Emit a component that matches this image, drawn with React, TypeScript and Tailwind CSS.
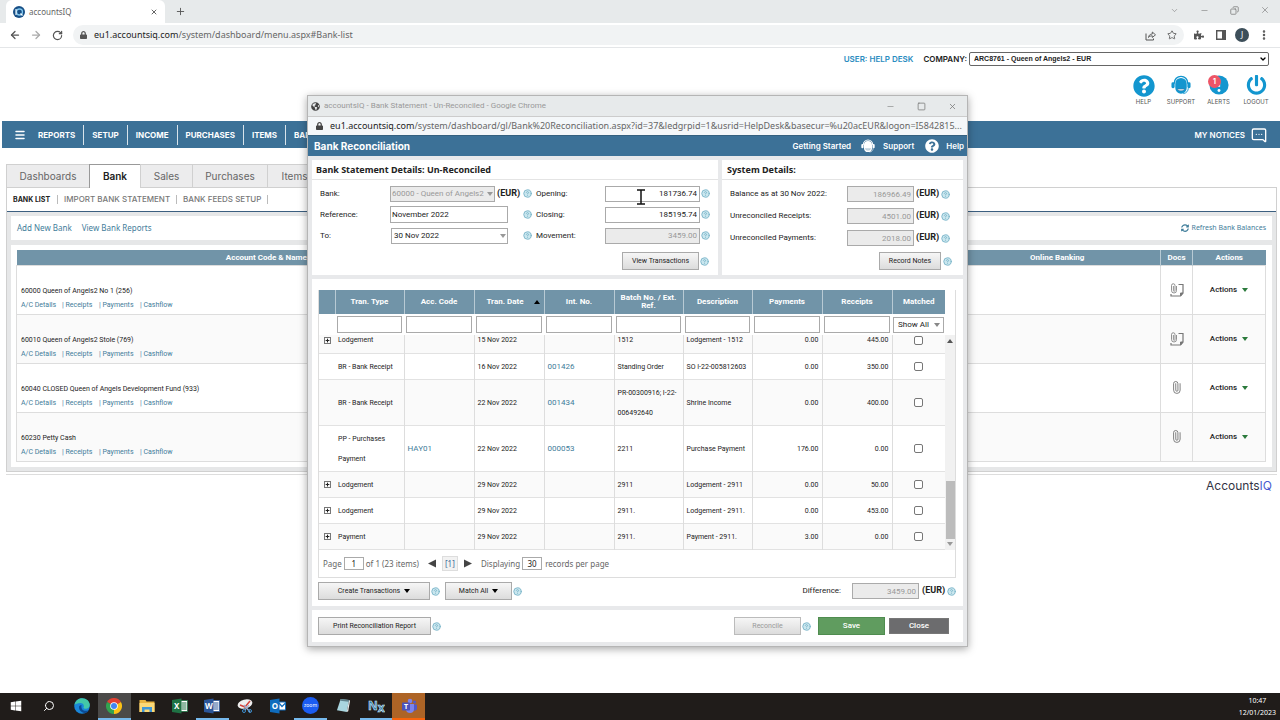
import { ReactNode } from "react";
import {
  ArrowLeft,
  ArrowRight,
  ChevronDown,
  CircleHelp,
  Copy,
  EllipsisVertical,
  Menu,
  MessageSquareMore,
  Minus,
  Paperclip,
  Plus,
  RotateCw,
  Search,
  Square,
  Star,
  X,
} from "lucide-react";
import { FaGlobeAmericas, FaLock, FaPowerOff, FaPuzzlePiece, FaQuestionCircle, FaSyncAlt, FaWindows } from "react-icons/fa";

const menuItems = ["REPORTS", "SETUP", "INCOME", "PURCHASES", "ITEMS", "BANK"];

const tabs = [
  { name: "Dashboards", width: "w-[83px]" },
  { name: "Bank", width: "w-[51px]" },
  { name: "Sales", width: "w-[52px]" },
  { name: "Purchases", width: "w-[75px]" },
  { name: "Items", width: "w-[54px]" },
];

const accounts = [
  { name: "60000 Queen of Angels2 No 1 (256)", note: true },
  { name: "60010 Queen of Angels2 Stole (769)", note: true },
  { name: "60040 CLOSED Queen of Angels Development Fund (933)", note: false },
  { name: "60230 Petty Cash", note: false },
];

const transactions = [
  { expand: true, type: "Lodgement", acc: "", date: "15 Nov 2022", no: "", ref: "1512", desc: "Lodgement - 1512", pay: "0.00", rec: "445.00", tall: false },
  { expand: false, type: "BR - Bank Receipt", acc: "", date: "16 Nov 2022", no: "001426", ref: "Standing Order", desc: "SO I-22-005812603", pay: "0.00", rec: "350.00", tall: false },
  { expand: false, type: "BR - Bank Receipt", acc: "", date: "22 Nov 2022", no: "001434", ref: "PR-00300916; I-22-006492640", desc: "Shrine Income", pay: "0.00", rec: "400.00", tall: true },
  { expand: false, type: "PP - Purchases Payment", acc: "HAY01", date: "22 Nov 2022", no: "000053", ref: "2211", desc: "Purchase Payment", pay: "176.00", rec: "0.00", tall: true },
  { expand: true, type: "Lodgement", acc: "", date: "29 Nov 2022", no: "", ref: "2911", desc: "Lodgement - 2911", pay: "0.00", rec: "50.00", tall: false },
  { expand: true, type: "Lodgement", acc: "", date: "29 Nov 2022", no: "", ref: "2911.", desc: "Lodgement - 2911.", pay: "0.00", rec: "453.00", tall: false },
  { expand: true, type: "Payment", acc: "", date: "29 Nov 2022", no: "", ref: "2911.", desc: "Payment - 2911.", pay: "3.00", rec: "0.00", tall: false },
];

const columns = ["Tran. Type", "Acc. Code", "Tran. Date", "Int. No.", "Batch No. / Ext. Ref.", "Description", "Payments", "Receipts"];

const Caret = ({ className = "" }: { className?: string }) => (
  <svg viewBox="0 0 6 4" className={`w-[6px] h-[4px] shrink-0 ${className}`}>
    <path d="M0 0h6L3 4z" fill="currentColor" />
  </svg>
);

const HelpDot = () => (
  <CircleHelp className="w-[9px] h-[9px] shrink-0 fill-[#c9e6ee] text-[#79b4c8]" strokeWidth={2.4} />
);

const Headset = ({ className }: { className: string }) => (
  <svg viewBox="0 0 22 22" className={className} fill="none">
    <path d="M3.500 9.500C3.500 4.500 7 1.500 11 1.500s7.500 3 7.500 8" stroke="currentColor" strokeWidth="1.600" />
    <rect x="0.500" y="8" width="3.500" height="6.500" rx="1.600" fill="currentColor" />
    <rect x="18" y="8" width="3.500" height="6.500" rx="1.600" fill="currentColor" />
    <path d="M4.700 9.500a6.300 6.300 0 0 1 12.600 0V14a6.300 6.500 0 0 1-12.600 0z" fill="currentColor" />
    <path d="M7 15.500h8c-.8 2.600-7.200 2.600-8 0z" className="fill-white stroke-[#3c7197]" strokeWidth=".6" />
    <path d="M19 14.500c0 3-2 5.500-5.500 6" stroke="currentColor" />
  </svg>
);

const GridCols = () => (
  <colgroup>
    <col className="w-[16px]" />
    <col className="w-[69px]" />
    <col className="w-[70px]" />
    <col className="w-[70px]" />
    <col className="w-[70px]" />
    <col className="w-[69px]" />
    <col className="w-[69px]" />
    <col className="w-[70px]" />
    <col className="w-[70px]" />
    <col className="w-[53px]" />
  </colgroup>
);

const GreyButton = ({ children, className = "" }: { children: ReactNode; className?: string }) => (
  <button
    className={`h-[18px] flex items-center justify-center gap-1 border border-[#aaa] bg-linear-to-b from-[#f6f6f6] to-[#dcdcdc] text-[7px] text-[#222] ${className}`}
  >
    {children}
  </button>
);

const BrowserBar = () => (
  <>
    <div className="h-[23px] bg-[#e7eaeb] flex items-end">
      <div className="ml-[6px] w-[159px] h-[23px] bg-white rounded-t-md flex items-center px-[7px] text-[8px] text-[#666]">
        <svg viewBox="0 0 12 12" className="w-[12px] h-[12px] mr-1">
          <circle cx="6" cy="6" r="6" fill="#174f86" />
          <circle cx="6.500" cy="6" r="3" fill="none" stroke="#7fc6ee" strokeWidth="1.300" />
          <path d="M3 3v6M7.500 7.500l2 2" stroke="#fff" strokeWidth="1.100" />
        </svg>
        <span className="flex-1">accountsIQ</span>
        <button aria-label="Close tab">
          <X className="w-[8px] h-[8px]" strokeWidth={3} />
        </button>
      </div>
      <button aria-label="New tab" className="ml-[10px] mb-[6px]">
        <Plus className="w-[11px] h-[11px] text-[#555]" />
      </button>
      <div className="ml-auto mr-[10px] mb-[8px] flex items-center gap-[21px] text-[#777]">
        <ChevronDown className="w-[9px] h-[9px]" strokeWidth={1.5} />
        <Minus className="w-[9px] h-[9px]" strokeWidth={1.5} />
        <Copy className="w-[9px] h-[9px] -scale-x-100" />
        <X className="w-[10px] h-[10px]" strokeWidth={1.5} />
      </div>
    </div>
    <div className="h-[25px] bg-white border-b border-[#e4e6e8] flex items-center pl-[9px] pr-[10px] text-[#555]">
      <ArrowLeft className="w-[12px] h-[12px]" strokeWidth={2.5} />
      <ArrowRight className="w-[12px] h-[12px] ml-[9px] text-[#aaa]" strokeWidth={2.5} />
      <RotateCw className="w-[11px] h-[11px] ml-[10px]" strokeWidth={2.6} />
      <div className="ml-[10px] h-[20px] flex-1 rounded-full bg-[#f1f3f4] flex items-center px-[7px]">
        <FaLock className="w-[7px] h-[8px] mr-[7px]" />
        <span className="flex-1 text-[9px] text-[#666]">
          <span className="text-[#222]">eu1.accountsiq.com</span>/system/dashboard/menu.aspx#Bank-list
        </span>
        <svg viewBox="0 0 11 11" className="w-[11px] h-[11px] mr-[11px]" fill="none" stroke="currentColor">
          <path d="M1 3.500v6.500h7.500V8.500" />
          <path d="M3.500 7.500c.3-2.300 1.500-3.400 3.800-3.500V2L10.500 4.800 7.300 7.500V5.800c-1.800 0-2.800.5-3.800 1.700z" strokeWidth=".9" />
        </svg>
        <Star className="w-[10px] h-[10px]" />
      </div>
      <FaPuzzlePiece className="w-[10px] h-[10px] ml-[10px]" />
      <svg viewBox="0 0 10 10" className="w-[10px] h-[10px] ml-[12px]">
        <path d="M.7.7h8.600v8.600H.7z" fill="none" stroke="currentColor" strokeWidth="1.400" />
        <path d="M6 1h3.500v8H6z" fill="currentColor" />
      </svg>
      <span className="ml-[9px] w-[14px] h-[14px] rounded-full bg-[#3d4f5a] text-white text-[8px] flex items-center justify-center">J</span>
      <EllipsisVertical className="w-[12px] h-[12px] ml-[9px]" strokeWidth={3} />
    </div>
  </>
);

const Header = () => (
  <header className="font-['Inter',sans-serif]">
    <div className="pt-[4px] pr-[11px] flex justify-end items-center text-[8px] font-semibold">
      <a href="#user" className="text-[#2a8cc0] mr-[10px]">USER: HELP DESK</a>
      <label htmlFor="company" className="text-[#222] mr-[2px]">COMPANY:</label>
      <div className="relative w-[300px]">
        <select
          id="company"
          className="w-full h-[14px] appearance-none border border-[#666] rounded-xs bg-white pl-[4px] text-[7px] font-bold text-[#222] font-['Liberation_Sans',sans-serif]"
        >
          <option>ARC8761 - Queen of Angels2 - EUR</option>
        </select>
        <ChevronDown className="absolute right-[2px] top-[3px] w-[8px] h-[8px] text-black" strokeWidth={4} />
      </div>
    </div>
    <div className="mt-[9px] mb-[15px] pr-[5px] h-[31px] flex justify-end text-[6px] text-[#555]">
      <a href="#help" className="w-[37px] flex flex-col items-center">
        <FaQuestionCircle className="w-[22px] h-[22px] text-[#1396cf]" />
        HELP
      </a>
      <a href="#support" className="w-[38px] flex flex-col items-center">
        <Headset className="w-[22px] h-[22px] mb-[2px] text-[#1396cf]" />
        SUPPORT
      </a>
      <a href="#alerts" className="relative w-[37px] flex flex-col items-center">
        <svg viewBox="0 0 22 22" className="w-[22px] h-[22px] mb-[2px]">
          <circle cx="11" cy="11" r="10.500" fill="#1396cf" />
          <path d="M11 5v8" stroke="#fff" strokeWidth="2.500" />
          <circle cx="11" cy="17" r="1.600" fill="#fff" />
        </svg>
        <span className="absolute left-[8px] top-0 w-[13px] h-[13px] rounded-full bg-[#ee5566] text-white text-[7px] font-bold flex items-center justify-center">1</span>
        ALERTS
      </a>
      <a href="#logout" className="w-[38px] flex flex-col items-center">
        <FaPowerOff className="w-[21px] h-[22px] mb-[2px] text-[#1396cf]" />
        LOGOUT
      </a>
    </div>
    <nav className="ml-[2px] h-[27px] bg-[#3c7197] flex items-center text-white text-[8px] font-bold">
      <button aria-label="Menu" className="ml-[12px] mr-[4px]">
        <Menu className="w-[12px] h-[12px]" strokeWidth={3} />
      </button>
      {menuItems.map((item) => (
        <a key={item} href={`#${item}`} className="h-[20px] px-[8px] flex items-center border-r border-white/80">
          {item}
        </a>
      ))}
      <a href="#notices" className="ml-auto mr-[13px] flex items-center gap-[6px] font-semibold">
        MY NOTICES
        <MessageSquareMore className="w-[16px] h-[16px] -scale-x-100" />
      </a>
    </nav>
  </header>
);

const BankList = () => (
  <main className="mt-[16px] ml-[6px] mr-[3px]">
    <div className="flex h-[23px] font-['Inter',sans-serif] text-[10px] text-[#666]">
      {tabs.map((t) => (
        <a
          key={t.name}
          href={`#${t.name}`}
          className={`${t.width} flex items-center justify-center border-t border-l ${
            t.name === "Bank" ? "relative -mb-px bg-white text-[#222] font-semibold border-[#999]" : "bg-[#ececed] border-[#d0d0d0]"
          }`}
        >
          {t.name}
        </a>
      ))}
    </div>
    <div className="border border-[#d0d0d0]">
      <div className="h-[24px] flex items-center pl-[6px] border-b border-[#3c5f80] font-['Inter',sans-serif] text-[8px] text-[#777]">
        <a href="#list" className="text-[7px] leading-[9px] text-[#222] font-bold pr-[7px] border-r border-[#bbb]">BANK LIST</a>
        <a href="#import" className="px-[6px] leading-[9px] font-medium border-r border-[#bbb]">IMPORT BANK STATEMENT</a>
        <a href="#feeds" className="px-[6px] leading-[9px] font-medium border-r border-[#bbb]">BANK FEEDS SETUP</a>
      </div>
      <div className="bg-[#e6e7e8] p-[4px] flex flex-col gap-[5px]">
        <div className="h-[24px] bg-white flex items-center gap-[10px] px-[6px] text-[8px] text-[#3f7d9a]">
          <a href="#add">Add New Bank</a>
          <a href="#reports">View Bank Reports</a>
          <a href="#refresh" className="ml-auto flex items-center gap-[3px] text-[7px]">
            <FaSyncAlt className="w-[8px] h-[8px]" />
            Refresh Bank Balances
          </a>
        </div>
        <div className="bg-white pt-[5px] pr-[6px] pb-[5px] pl-[5px]">
          <table className="w-full table-fixed border-collapse font-['Roboto',sans-serif] text-[8px] text-[#222]">
            <colgroup>
              <col className="w-[40%]" />
              <col />
              <col className="w-[206px]" />
              <col className="w-[32px]" />
              <col className="w-[73px]" />
            </colgroup>
            <thead>
              <tr className="h-[15px] bg-[#7194a8] text-white">
                <th>Account Code &amp; Name</th>
                <th />
                <th className="border-r border-[#b8cad4]">Online Banking</th>
                <th className="border-r border-[#b8cad4]">Docs</th>
                <th>Actions</th>
              </tr>
            </thead>
            <tbody>
              {accounts.map((a) => (
                <tr key={a.name} className="h-[49px] even:bg-[#fafafa] border border-[#ddd]">
                  <td className="pl-[4px] pt-[17px] text-[7px]">
                    <div className="mb-[4px]">{a.name}</div>
                    <div className="flex text-[#3f7d9a]">
                      <a href="#details" className="w-[41px]">A/C Details</a>
                      <a href="#receipts" className="w-[37px]">| Receipts</a>
                      <a href="#payments" className="w-[41px]">| Payments</a>
                      <a href="#cashflow">| Cashflow</a>
                    </div>
                  </td>
                  <td />
                  <td className="border-r border-[#ddd]" />
                  <td className="border-r border-[#ddd]">
                    {a.note ? (
                      <svg viewBox="0 0 14 14" className="w-[14px] h-[14px] mx-auto text-[#777]" fill="none" stroke="currentColor">
                        <path d="M8.500 1.500H13V10l-2.500 3H1v-2" strokeWidth="1.200" />
                        <path d="M13 10h-2.500v3z" fill="currentColor" />
                        <path d="M6.500 3v4.500a2.500 2.500 0 0 1-5 0V2.500a1.700 1.700 0 0 1 3.500 0v5a.8.8 0 0 1-1.600 0V3" strokeWidth=".8" />
                      </svg>
                    ) : (
                      <Paperclip className="w-[13px] h-[13px] mx-auto text-[#777] rotate-[-45deg]" strokeWidth={1.6} />
                    )}
                  </td>
                  <td className="font-medium">
                    <button className="flex items-center gap-[5px] mx-auto">
                      Actions <Caret className="text-[#2b7a3c]" />
                    </button>
                  </td>
                </tr>
              ))}
            </tbody>
          </table>
        </div>
      </div>
    </div>
    <footer className="mt-[2px] pt-[2px] pr-[5px] border-t border-[#ddd] text-right font-['Inter',sans-serif] text-[12px] text-[#334]">
      Accounts<span className="text-[#4a5bd0]">IQ</span>
    </footer>
  </main>
);

const inputStyle = "h-[16px] border border-[#aaa] px-[2px] text-right";

const SystemRow = ({ id, label, value }: { id: string; label: string; value: string }) => (
  <div className="h-[22px] flex items-center">
    <label htmlFor={id} className="w-[117px]">{label}</label>
    <input id={id} disabled defaultValue={value} className={`${inputStyle} w-[67px] bg-[#ebebeb] text-[#999]`} />
    <b className="w-[25px] ml-[2px] text-[9px]">(EUR)</b>
    <HelpDot />
  </div>
);

const StatementRow = ({ id, label, value, disabled, children }: { id: string; label: string; value: string; disabled?: boolean; children: ReactNode }) => (
  <div className="h-[21px] flex items-center">
    {children}
    <HelpDot />
    <label htmlFor={id} className="w-[69px] ml-[4px]">{label}</label>
    <input
      id={id}
      disabled={disabled}
      defaultValue={value}
      className={`${inputStyle} w-[95px] mr-px ${disabled ? "bg-[#ebebeb] text-[#999]" : "bg-white text-[#222]"}`}
    />
    <HelpDot />
  </div>
);

const TransactionGrid = () => (
  <div className="border-r border-b border-l border-[#ddd]">
    <div className="pr-[12px]">
      <table className="w-full table-fixed border-collapse">
        <GridCols />
        <thead>
          <tr className="h-[24px] bg-[#7194a8] text-white leading-[8px]">
            <th className="border-r border-[#b8cad4]" />
            {columns.map((c) => (
              <th key={c} className="border-r border-[#b8cad4]">
                {c === "Tran. Date" ? (
                  <span className="flex items-center justify-end gap-[10px] pr-[4px]">
                    {c} <Caret className="rotate-180 text-black" />
                  </span>
                ) : (
                  c
                )}
              </th>
            ))}
            <th>Matched</th>
          </tr>
          <tr className="h-[21px]">
            <td />
            {columns.map((c) => (
              <td key={c} className="px-[2px]">
                <input aria-label={`Filter ${c}`} className="block w-full h-[17px] border border-[#aaa]" />
              </td>
            ))}
            <td className="px-px">
              <div className="relative">
                <select aria-label="Filter Matched" className="block w-full h-[16px] appearance-none border border-[#aaa] pl-[4px]">
                  <option>Show All</option>
                </select>
                <Caret className="absolute right-[4px] top-[6px] text-[#888]" />
              </div>
            </td>
          </tr>
        </thead>
      </table>
    </div>
    <div className="flex h-[215px] overflow-hidden">
      {/* list is scrolled to the end, so the first row is cut at the top */}
      <div className="flex-1 flex flex-col justify-end">
        <table className="w-full table-fixed border-collapse text-[7px]">
          <GridCols />
          <tbody>
            {transactions.map((t, i) => (
              <tr key={i} className={`${t.tall ? "h-[46px] leading-[20px]" : "h-[26px] leading-[10px]"} odd:bg-[#fafafa] border-b border-[#e2e2e2]`}>
                <td>
                  {t.expand && (
                    <button aria-label="Expand" className="mx-auto flex w-[7px] h-[7px] border border-[#777] items-center justify-center">
                      <Plus className="w-[5px] h-[5px] shrink-0" strokeWidth={5} />
                    </button>
                  )}
                </td>
                <td className="px-[3px] border-r border-[#ddd]">{t.type}</td>
                <td className="px-[3px] border-r border-[#ddd] text-[8px] text-[#3f7d9a]">{t.acc}</td>
                <td className="px-[3px] border-r border-[#ddd]">{t.date}</td>
                <td className="px-[3px] border-r border-[#ddd] text-[8px]">
                  {t.no && <a href={`#${t.no}`} className="text-[#3f7d9a]">{t.no}</a>}
                </td>
                <td className="px-[3px] border-r border-[#ddd]">{t.ref}</td>
                <td className="px-[3px] border-r border-[#ddd] whitespace-nowrap">{t.desc}</td>
                <td className="px-[3px] border-r border-[#ddd] text-right">{t.pay}</td>
                <td className="px-[3px] border-r border-[#ddd] text-right">{t.rec}</td>
                <td>
                  <input type="checkbox" aria-label={`Match ${t.desc}`} className="block mx-auto w-[9px] h-[9px] appearance-none border border-[#777] rounded-xs bg-white" />
                </td>
              </tr>
            ))}
          </tbody>
        </table>
      </div>
      <div className="w-[12px] bg-[#f1f1f1] flex flex-col items-center py-[4px] text-[#555]">
        <Caret className="rotate-180" />
        <div className="mt-auto mb-[3px] w-[9px] h-[58px] bg-[#bcbcbc]" />
        <Caret className="text-[#999]" />
      </div>
    </div>
    <div className="h-[27px] flex items-center pl-[4px] text-[8px] text-[#666] font-['Noto_Sans',sans-serif]">
      <label htmlFor="page">Page</label>
      <input id="page" defaultValue="1" className="w-[20px] h-[13px] mx-[2px] border border-[#aaa] text-center text-[#222]" />
      of 1 (23 items)
      <button aria-label="Previous page" className="ml-[9px]">
        <svg viewBox="0 0 8 8" className="w-[8px] h-[9px]"><path d="M8 0v8L0 4z" fill="#444" /></svg>
      </button>
      <button className="mx-[6px] w-[16px] h-[15px] border border-[#ddd] bg-[#f2f2f2] text-[#3f6d9a]">[1]</button>
      <button aria-label="Next page">
        <svg viewBox="0 0 8 8" className="w-[8px] h-[9px]"><path d="M0 0v8l8-4z" fill="#444" /></svg>
      </button>
      <label htmlFor="size" className="ml-[9px]">Displaying</label>
      <input id="size" defaultValue="30" className="w-[20px] h-[13px] ml-[2px] mr-[3px] border border-[#aaa] text-center text-[#222]" />
      records per page
    </div>
  </div>
);

const ReconcileWindow = () => (
  <div className="absolute left-[307px] top-[95px] w-[661px] bg-[#e8e9eb] border border-[#b5b5b5] shadow-[0_2px_8px_rgba(0,0,0,0.35)] text-[8px] text-[#222]">
    <div className="h-[20px] flex items-center px-[3px] bg-[#e7eaeb] text-[#999]">
      <FaGlobeAmericas className="w-[9px] h-[9px] mr-[4px] text-[#444]" />
      <span className="flex-1 font-['Roboto',sans-serif]">accountsIQ - Bank Statement - Un-Reconciled - Google Chrome</span>
      <div className="flex items-center gap-[22px] mr-[7px] text-[#777]">
        <Minus className="w-[9px] h-[9px]" strokeWidth={1.5} />
        <Square className="w-[9px] h-[9px]" strokeWidth={2} />
        <X className="w-[9px] h-[9px]" strokeWidth={2} />
      </div>
    </div>
    <div className="h-[19px] flex items-center pl-[8px] bg-[#f4f7f9] border-t border-[#ccc] text-[9px] text-[#666]">
      <FaLock className="w-[7px] h-[8px] mr-[7px] text-[#444]" />
      <span className="whitespace-nowrap">
        <span className="text-[#222]">eu1.accountsiq.com</span>
        /system/dashboard/gl/Bank%20Reconciliation.aspx?id=37&amp;ledgrpid=1&amp;usrid=HelpDesk&amp;basecur=%u20acEUR&amp;logon=I5842815...
      </span>
    </div>
    <div className="h-[21px] flex items-center pl-[6px] pr-[3px] bg-[#3c7197] border-t border-[#34607f] text-white font-bold font-['Inter',sans-serif]">
      <h1 className="flex-1 text-[10px]">Bank Reconciliation</h1>
      <a href="#start" className="font-semibold">Getting Started</a>
      <Headset className="w-[14px] h-[14px] ml-[10px] mr-[8px]" />
      <a href="#popup-support" className="font-semibold">Support</a>
      <FaQuestionCircle className="w-[14px] h-[14px] ml-[11px] mr-[7px]" />
      <a href="#popup-help" className="font-semibold">Help</a>
    </div>
    <div className="p-[4px] flex flex-col gap-[4px] font-['Roboto',sans-serif]">
      <div className="flex gap-[4px]">
        <section className="w-[406px] h-[115px] bg-white">
          <h2 className="h-[20px] flex items-center pl-[4px] border-b border-[#e4e4e4] font-bold text-[9px] font-['Noto_Sans',sans-serif]">
            Bank Statement Details: Un-Reconciled
          </h2>
          <div className="pt-[3px] pl-[8px]">
            <StatementRow id="opening" label="Opening:" value="181736.74">
              <label htmlFor="bank" className="w-[70px]">Bank:</label>
              <div className="relative w-[105px]">
                <select id="bank" disabled className="block w-full h-[16px] appearance-none border border-[#aaa] bg-[#ebebeb] pl-px text-[#999]">
                  <option>60000 - Queen of Angels2</option>
                </select>
                <Caret className="absolute right-[2px] top-[6px] text-[#999]" />
              </div>
              <b className="w-[26px] ml-[2px] text-[9px]">(EUR)</b>
            </StatementRow>
            <StatementRow id="closing" label="Closing:" value="185195.74">
              <label htmlFor="reference" className="w-[70px]">Reference:</label>
              <input id="reference" defaultValue="November 2022" className="w-[118px] h-[17px] mr-[15px] border border-[#aaa] px-px" />
            </StatementRow>
            <StatementRow id="movement" label="Movement:" value="3459.00" disabled>
              <label htmlFor="to" className="w-[71px]">To:</label>
              <div className="relative w-[117px] mr-[15px]">
                <select id="to" className="block w-full h-[16px] appearance-none border border-[#aaa] pl-[2px]">
                  <option>30 Nov 2022</option>
                </select>
                <Caret className="absolute right-[2px] top-[6px] text-[#999]" />
              </div>
            </StatementRow>
            <div className="mt-[6px] pr-[9px] flex items-center justify-end gap-px">
              <GreyButton className="w-[77px]">View Transactions</GreyButton>
              <HelpDot />
            </div>
          </div>
        </section>
        <section className="flex-1 bg-white">
          <h2 className="h-[20px] flex items-center pl-[5px] border-b border-[#e4e4e4] font-bold text-[9px] font-['Noto_Sans',sans-serif]">
            System Details:
          </h2>
          <div className="pt-[3px] pl-[8px]">
            <SystemRow id="balance" label="Balance as at 30 Nov 2022:" value="186966.49" />
            <SystemRow id="receipts" label="Unreconciled Receipts:" value="4501.00" />
            <SystemRow id="payments" label="Unreconciled Payments:" value="2018.00" />
            <div className="mt-[3px] pr-[11px] flex items-center justify-end gap-[2px]">
              <GreyButton className="w-[62px]">Record Notes</GreyButton>
              <HelpDot />
            </div>
          </div>
        </section>
      </div>
      <section className="bg-white pt-[11px] pl-[6px] pr-[7px] pb-[6px]">
        <TransactionGrid />
        <div className="mt-[4px] flex items-center">
          <GreyButton className="w-[112px] mr-px">
            Create Transactions <Caret className="text-black" />
          </GreyButton>
          <HelpDot />
          <GreyButton className="w-[67px] ml-[5px] mr-px">
            Match All <Caret className="text-black" />
          </GreyButton>
          <HelpDot />
          <label htmlFor="difference" className="ml-auto mr-[11px]">Difference:</label>
          <input id="difference" disabled defaultValue="3459.00" className={`${inputStyle} w-[67px] bg-[#ebebeb] text-[#999]`} />
          <b className="w-[25px] ml-[3px] text-[9px]">(EUR)</b>
          <HelpDot />
        </div>
      </section>
      <section className="h-[32px] bg-white flex items-center pl-[6px] pr-[14px]">
        <GreyButton className="w-[113px] mr-px">Print Reconciliation Report</GreyButton>
        <HelpDot />
        <button disabled className="ml-auto mr-px w-[67px] h-[18px] border border-[#bbb] bg-linear-to-b from-[#f6f6f6] to-[#dcdcdc] text-[7px] text-[#999]">
          Reconcile
        </button>
        <HelpDot />
        <button className="ml-[7px] w-[67px] h-[18px] border border-[#4f8c4f] bg-[#609c5f] text-white font-medium">Save</button>
        <button className="ml-[4px] w-[60px] h-[16px] border border-[#777] bg-[#6c6c6e] text-white font-medium">Close</button>
      </section>
    </div>
  </div>
);

// white page icon with a coloured letter block, used by the office apps
const OfficeIcon = ({ letter, color }: { letter: string; color: string }) => (
  <svg viewBox="0 0 16 16" className="w-[16px] h-[16px]">
    <path d="M8 2.500h7.500v11H8z" fill="#fff" stroke={color} strokeWidth=".8" />
    <path d="M9.500 5h5M9.500 7h5M9.500 9h5M9.500 11h5" stroke={color} />
    <path d="M0 2l9.500-1.500v15L0 14z" fill={color} />
    <text x="4.800" y="11" textAnchor="middle" fontSize="8" fontWeight="bold" fill="#fff" fontFamily="Noto Sans">{letter}</text>
  </svg>
);

const taskIcons: { name: string; style: string; icon: ReactNode }[] = [
  { name: "Start", style: "border-transparent", icon: <FaWindows className="w-[12px] h-[12px] text-white" /> },
  { name: "Search", style: "border-transparent", icon: <Search className="w-[12px] h-[12px] text-white -scale-x-100" /> },
  {
    name: "Edge",
    style: "border-transparent",
    icon: (
      <svg viewBox="0 0 16 16" className="w-[16px] h-[16px]">
        <circle cx="8" cy="8" r="7.800" fill="#1a86d9" />
        <path d="M.5 7C1.500 2.500 4.500.2 8 .2c4.500 0 7.800 3.200 7.800 6.600 0 2.500-2 4-4 4-1.800 0-2.600-.7-2.300-1.300C10.500 8 9.500 5 6.500 5 3.500 5 1.200 6 .5 7z" fill="#43c8a8" />
        <path d="M5 9c0 4 3.500 6 6.500 6 1.500-.5 2.800-1.500 3.500-3-4 2-8.500.5-7.500-5C6 7 5 8 5 9z" fill="#0c4a94" />
      </svg>
    ),
  },
  {
    name: "Chrome",
    style: "border-[#76b9ed] bg-[#4b4a49]",
    icon: (
      <svg viewBox="0 0 16 16" className="w-[16px] h-[16px]">
        <path d="M8 8L1.070 4A8 8 0 0 1 14.930 4z" fill="#e34133" />
        <path d="M8 8l6.930-4A8 8 0 0 1 8 16z" fill="#fbc116" />
        <path d="M8 8v8A8 8 0 0 1 1.070 4z" fill="#32a350" />
        <circle cx="8" cy="8" r="3.800" fill="#fff" />
        <circle cx="8" cy="8" r="3" fill="#4285f4" />
      </svg>
    ),
  },
  {
    name: "File Explorer",
    style: "border-transparent",
    icon: (
      <svg viewBox="0 0 16 14" className="w-[16px] h-[14px]">
        <path d="M.5 1h6l1 1.500h8V13H.5z" fill="#e9b441" />
        <path d="M.5 4h15v9H.5z" fill="#fbd978" />
        <path d="M3 8h10v5h-2.500v-2.500h-5V13H3z" fill="#3f97d8" />
      </svg>
    ),
  },
  { name: "Excel", style: "border-transparent", icon: <OfficeIcon letter="X" color="#1f7244" /> },
  { name: "Word", style: "border-[#76b9ed]", icon: <OfficeIcon letter="W" color="#2b569a" /> },
  {
    name: "Snipping Tool",
    style: "border-transparent",
    icon: (
      <svg viewBox="0 0 16 16" className="w-[16px] h-[16px]">
        <ellipse cx="8" cy="6" rx="7.500" ry="4.500" fill="#eee" transform="rotate(-15 8 6)" />
        <path d="M3 7l5 2 5-6" stroke="#d4433b" strokeWidth="1.500" fill="none" />
        <path d="M7 7l6 7M12 7l-4 5" stroke="#9ac" strokeWidth="1.200" />
        <circle cx="7" cy="13" r="1.500" fill="none" stroke="#3c8fd0" />
        <circle cx="13" cy="13" r="1.500" fill="none" stroke="#3c8fd0" />
      </svg>
    ),
  },
  {
    name: "Outlook",
    style: "border-transparent",
    icon: (
      <svg viewBox="0 0 16 16" className="w-[16px] h-[16px]">
        <path d="M8 4h7.500v8H8z" fill="#fff" stroke="#0f6cbd" />
        <path d="M9 5l3 3.500L15.500 5" fill="none" stroke="#0f6cbd" strokeWidth="1.200" />
        <path d="M0 2l9.500-1.500v15L0 14z" fill="#0f6cbd" />
        <text x="4.800" y="11" textAnchor="middle" fontSize="8" fontWeight="bold" fill="#fff" fontFamily="Noto Sans">O</text>
      </svg>
    ),
  },
  {
    name: "Zoom",
    style: "border-[#76b9ed]",
    icon: <span className="w-[17px] h-[17px] rounded-full bg-[#1b5cf0] text-white text-[5px] flex items-center justify-center">zoom</span>,
  },
  {
    name: "Notepad",
    style: "border-transparent",
    icon: (
      <svg viewBox="0 0 16 16" className="w-[15px] h-[15px]">
        <path d="M5 1l9 1-2.500 13L1 13z" fill="#a9d5df" />
        <path d="M14 2l1 1-2 11-1.500 1z" fill="#eee" />
        <path d="M5 1l9 1-.4 2-9.100-1z" fill="#62838d" />
      </svg>
    ),
  },
  {
    name: "Nx",
    style: "border-[#76b9ed]",
    icon: (
      <svg viewBox="0 0 18 20" className="w-[18px] h-[20px]" fontFamily="Noto Sans" fontWeight="bold" fontSize="12" fill="#2f78a8" stroke="#cfe8f5" strokeWidth=".6">
        <text x="1" y="14">
          N<tspan dy="2">x</tspan>
        </text>
      </svg>
    ),
  },
  {
    name: "Teams",
    style: "border-[#f7630c] bg-[#ad6426]",
    icon: (
      <svg viewBox="0 0 16 16" className="w-[16px] h-[16px]">
        <circle cx="9" cy="3" r="2.300" fill="#7b83eb" />
        <circle cx="13.500" cy="4" r="1.600" fill="#5059c9" />
        <path d="M12 6.500h4V11a2.500 2.500 0 0 1-4 1z" fill="#5059c9" />
        <path d="M5 6h8v5a4 4 0 0 1-8 0z" fill="#7b83eb" />
        <rect x="1" y="4.500" width="8" height="8" rx=".8" fill="#4b53bc" />
        <text x="5" y="11" textAnchor="middle" fontSize="7" fontWeight="bold" fill="#fff" fontFamily="Noto Sans">T</text>
      </svg>
    ),
  },
];

const Taskbar = () => (
  <footer className="mt-auto h-[27px] bg-[#201c1a] flex items-stretch">
    <div className="w-[425px] flex">
      {taskIcons.map((t) => (
        <button key={t.name} aria-label={t.name} className={`flex-1 flex items-center justify-center border-b-2 ${t.style}`}>
          {t.icon}
        </button>
      ))}
    </div>
    <div className="ml-auto pr-[4px] flex flex-col justify-center text-center text-white text-[7px] leading-[12px]">
      <span>10:47</span>
      <span>12/01/2023</span>
    </div>
  </footer>
);

const App = () => {
  return (
    <div className="relative min-h-screen flex flex-col bg-white font-['Noto_Sans',sans-serif]">
      <BrowserBar />
      <Header />
      <BankList />
      <Taskbar />
      <ReconcileWindow />
      {/* text cursor over the opening balance */}
      <svg viewBox="0 0 10 16" className="absolute left-[636px] top-[189px] w-[10px] h-[16px]" fill="none" stroke="#111" strokeWidth="1.500">
        <path d="M1 1h8M1 15h8M5 1v14" />
      </svg>
    </div>
  );
};

export default App;
